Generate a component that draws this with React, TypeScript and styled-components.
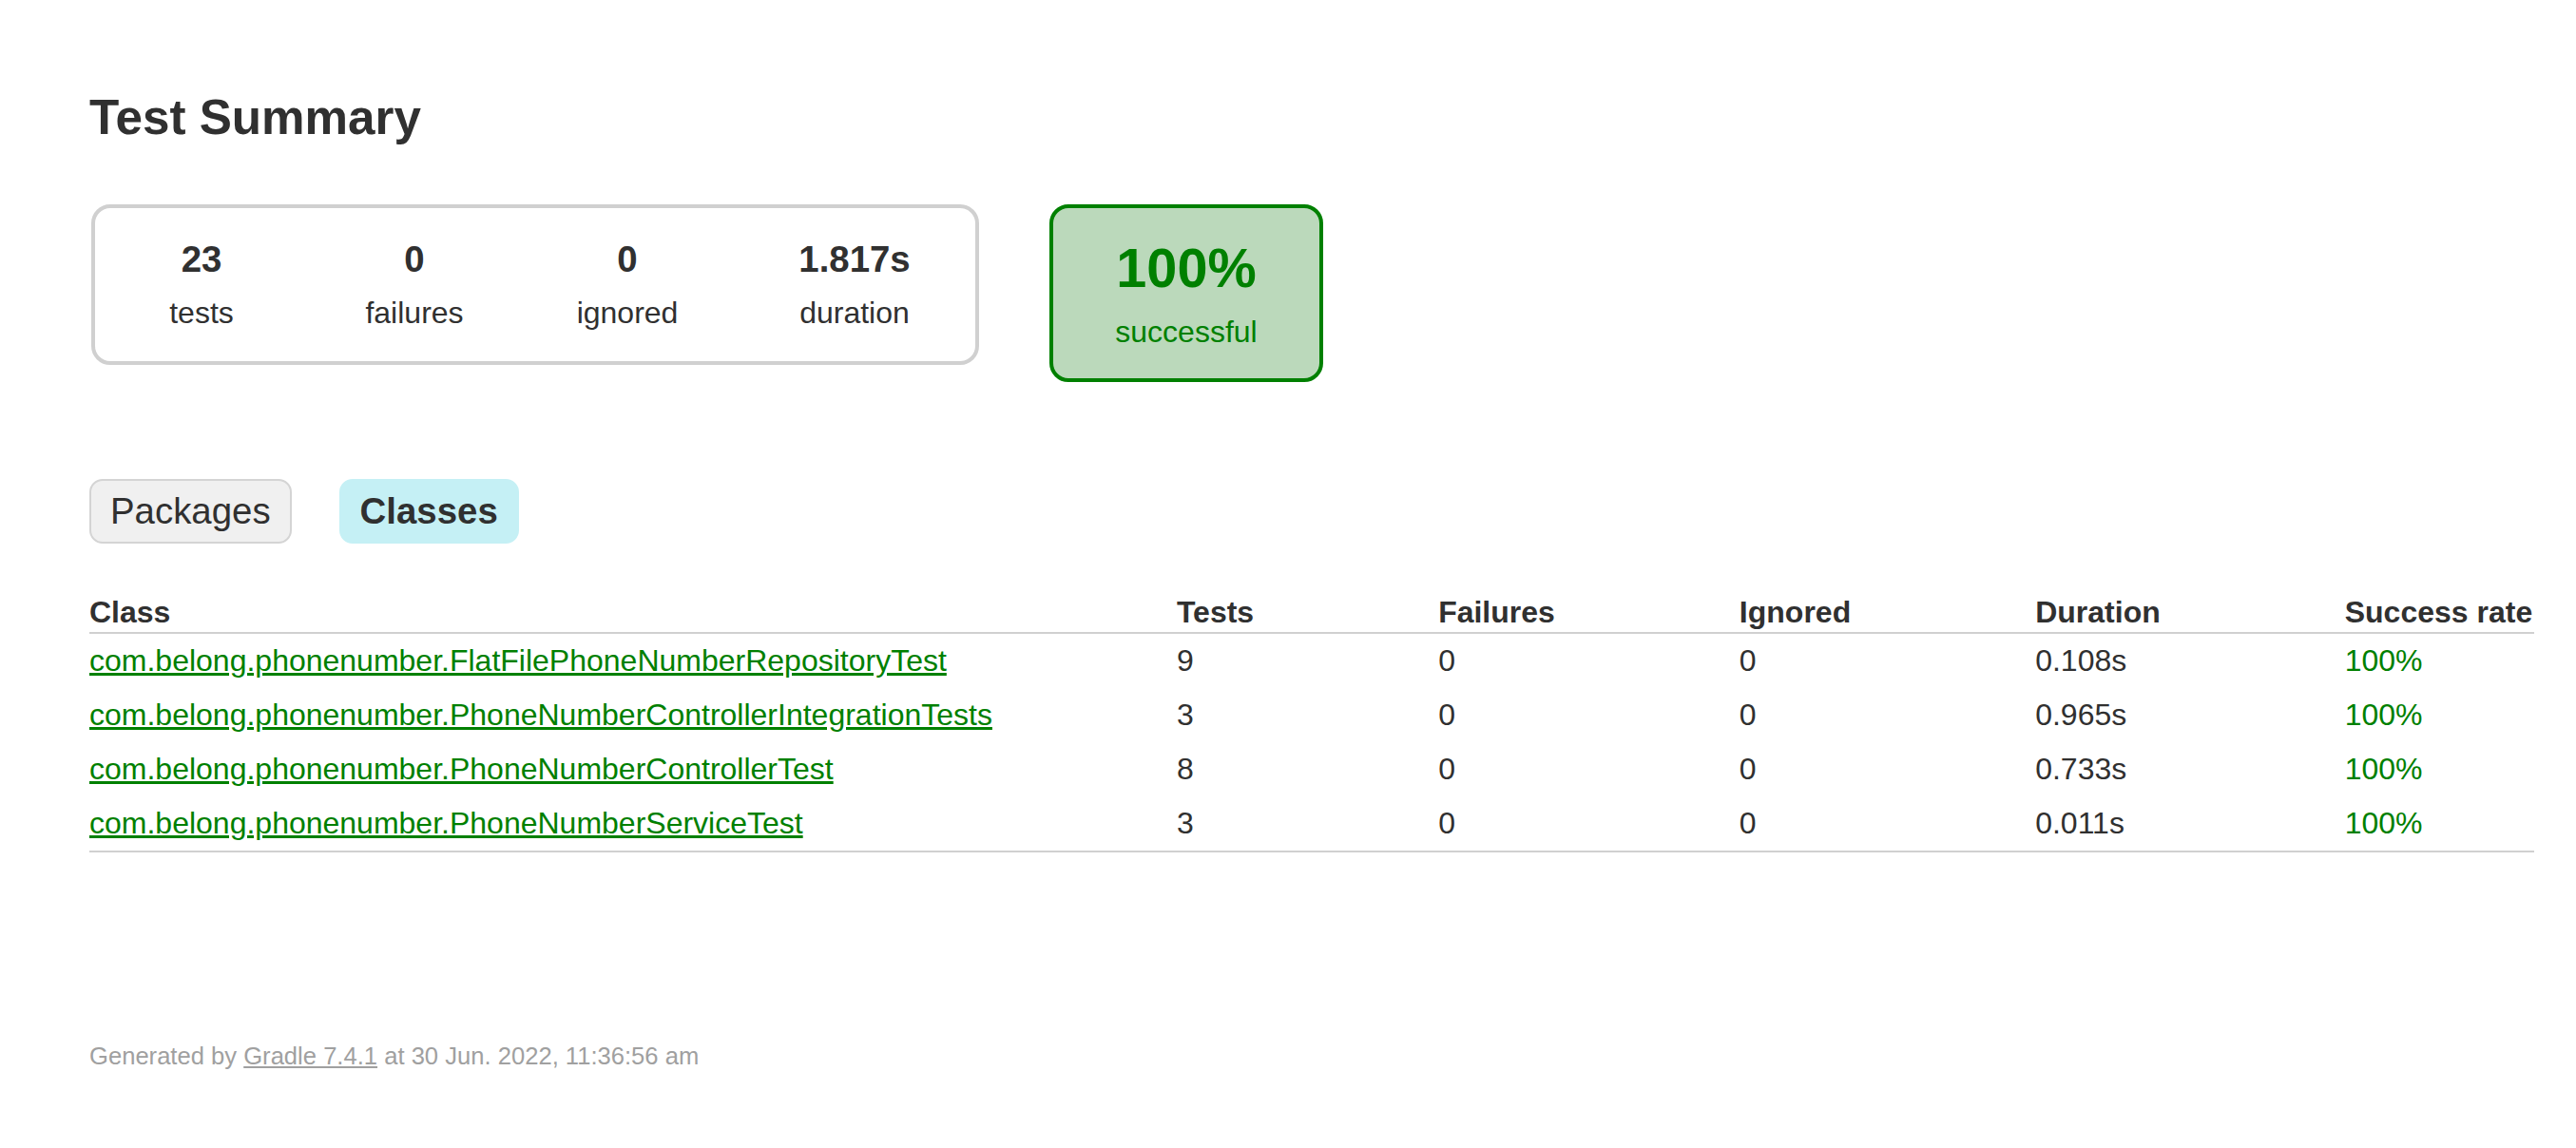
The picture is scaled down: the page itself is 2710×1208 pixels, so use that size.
import React from "react";
import styled, {createGlobalStyle} from "styled-components";

const GlobalStyle = createGlobalStyle`
  body {
    margin: 0;
    padding: 0;
    font-family: "Liberation Sans", Arial, Helvetica, sans-serif;
    font-size: 32px;
    color: #303030;
  }
`
const Content = styled.div`
  padding: 60px 100px 60px 94px;
`
const Title = styled.h1`
  font-size: 51.2px;
  font-weight: bold;
  margin: 34.3px 0 20px;
  white-space: nowrap;
`
const Summary = styled.div`
  display: flex;
  align-items: flex-start;
  gap: 74px;
  padding: 2px;
  margin: 60px 0 80px;
`
const SummaryGroup = styled.div`
  display: flex;
  border: solid 4px #d0d0d0;
  border-radius: 20px;
`
const InfoBox = styled.div`
  width: ${(props: {$width: number}) => props.$width}px;
  margin: 2px;
  padding: 30px 0;
  text-align: center;
`
const Counter = styled.div`
  font-size: 38.4px;
  font-weight: bold;
  margin-bottom: 16px;
`
const Label = styled.p`
  margin: 0;
`
const SuccessRate = styled.div`
  width: 280px;
  padding: 30px 0;
  text-align: center;
  border: solid 4px #008000;
  border-radius: 20px;
  background-color: #bbd9bb;
  color: #008000;
`
const Percent = styled.div`
  font-size: 57.6px;
  font-weight: bold;
  margin-bottom: 16px;
`
const TabLinks = styled.ul`
  display: flex;
  list-style: none;
  margin: 32px 0;
  padding: 20px 0;
`
const TabLink = styled.li<{$selected?: boolean}>`
  padding: 10px 20px;
  margin-right: 50px;
  border-radius: 14px;
  border: solid 2px ${props => props.$selected ? '#c5f0f5' : '#d4d4d4'};
  background-color: ${props => props.$selected ? '#c5f0f5' : '#f0f0f0'};
  font-size: 38.4px;
  font-weight: ${props => props.$selected ? 'bold' : 'normal'};
  color: #303030;
  white-space: nowrap;
`
const Table = styled.table`
  border-collapse: collapse;
  border-bottom: solid #d0d0d0 2px;
`
const Th = styled.th`
  text-align: left;
  white-space: nowrap;
  font-weight: bold;
  padding: 2px 2px 2px 192px;
  border-bottom: solid #d0d0d0 2px;
  &:first-child {
    padding-left: 0;
  }
`
const Td = styled.td<{$success?: boolean}>`
  white-space: nowrap;
  padding: 10px 2px 10px 192px;
  color: ${props => props.$success ? '#008000' : '#303030'};
  &:first-child {
    padding-left: 0;
  }
  & a {
    color: #008000;
    text-decoration: underline;
  }
`
const Footer = styled.div`
  margin-top: 200px;
  font-size: 25.6px;
  white-space: nowrap;
  color: #a0a0a0;
  & a {
    color: #a0a0a0;
    text-decoration: underline;
  }
`

const counters = [
  {value: '23', label: 'tests', width: 220},
  {value: '0', label: 'failures', width: 220},
  {value: '0', label: 'ignored', width: 220},
  {value: '1.817s', label: 'duration', width: 250},
]

const rows = [
  {name: 'com.belong.phonenumber.FlatFilePhoneNumberRepositoryTest', tests: 9, duration: '0.108s'},
  {name: 'com.belong.phonenumber.PhoneNumberControllerIntegrationTests', tests: 3, duration: '0.965s'},
  {name: 'com.belong.phonenumber.PhoneNumberControllerTest', tests: 8, duration: '0.733s'},
  {name: 'com.belong.phonenumber.PhoneNumberServiceTest', tests: 3, duration: '0.011s'},
]

const App = () => {
  return (
      <Content>
        <GlobalStyle/>
        <Title>Test Summary</Title>
        <Summary>
          <SummaryGroup>
            {counters.map(c => (
                <InfoBox key={c.label} $width={c.width}>
                  <Counter>{c.value}</Counter>
                  <Label>{c.label}</Label>
                </InfoBox>
            ))}
          </SummaryGroup>
          <SuccessRate>
            <Percent>100%</Percent>
            <Label>successful</Label>
          </SuccessRate>
        </Summary>
        <TabLinks>
          <TabLink>Packages</TabLink>
          <TabLink $selected>Classes</TabLink>
        </TabLinks>
        <Table>
          <thead>
          <tr>
            <Th>Class</Th>
            <Th>Tests</Th>
            <Th>Failures</Th>
            <Th>Ignored</Th>
            <Th>Duration</Th>
            <Th>Success rate</Th>
          </tr>
          </thead>
          <tbody>
          {rows.map(r => (
              <tr key={r.name}>
                <Td><a href="#">{r.name}</a></Td>
                <Td>{r.tests}</Td>
                <Td>0</Td>
                <Td>0</Td>
                <Td>{r.duration}</Td>
                <Td $success>100%</Td>
              </tr>
          ))}
          </tbody>
        </Table>
        <Footer>
          Generated by <a href="#">Gradle 7.4.1</a> at 30 Jun. 2022, 11:36:56 am
        </Footer>
      </Content>
  )
}

export default App
